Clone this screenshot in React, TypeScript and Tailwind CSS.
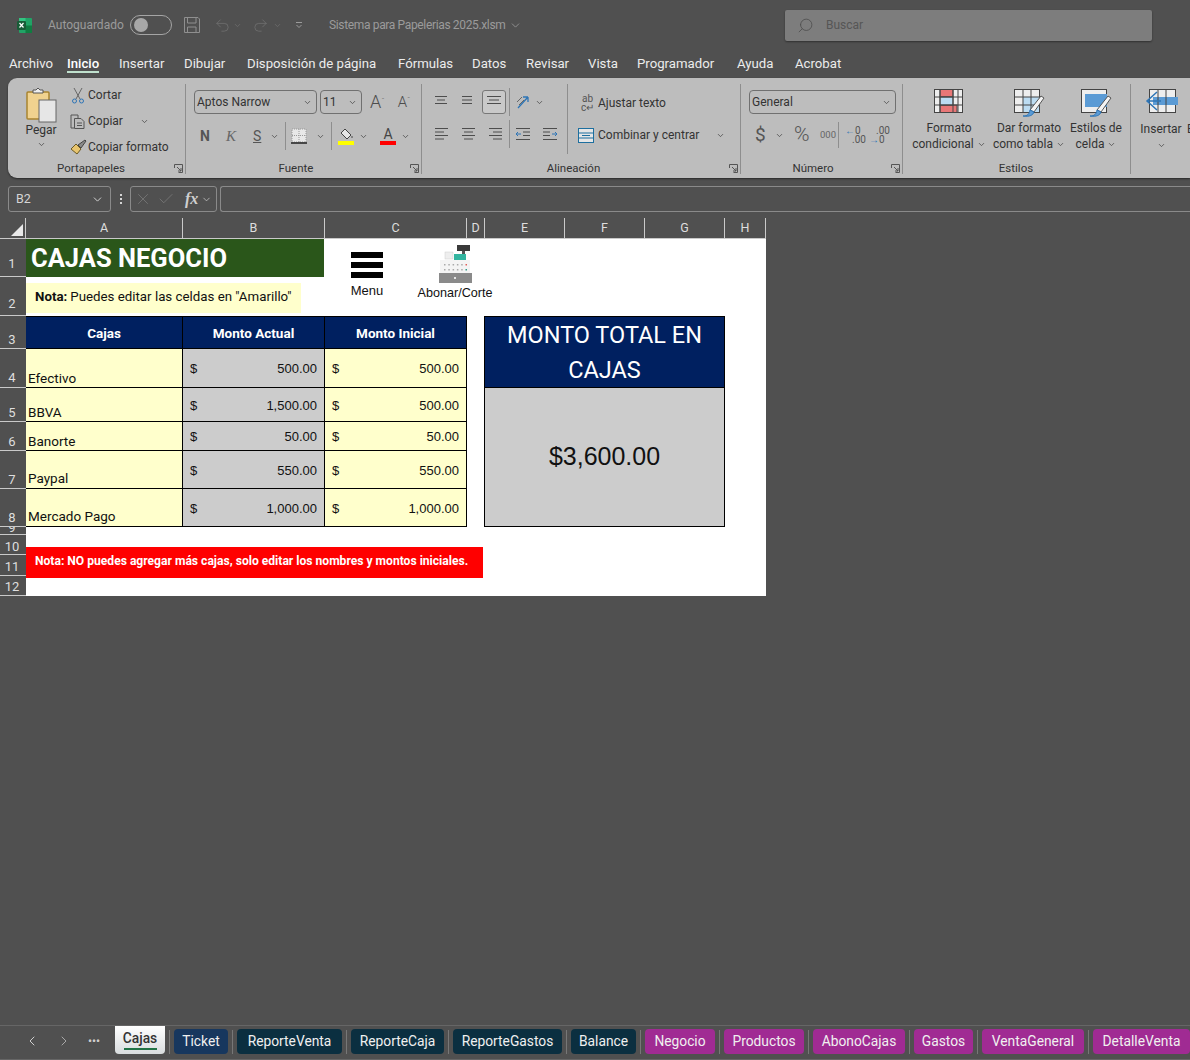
import type { ReactNode } from "react";
import { Check, ChevronDown, ChevronLeft, ChevronRight, Redo2, Search, Undo2, X } from "lucide-react";

const uiFont = "font-['Roboto',sans-serif]";

const Caret = ({ className = "" }: { className?: string }) => (
  <ChevronDown size={9} strokeWidth={2} className={`shrink-0 text-[#444] ${className}`} />
);

const Lines = ({ rows }: { rows: [number, number][] }) => (
  <svg width="18" height="16" viewBox="0 0 18 16" className="shrink-0" stroke="#4d4d4d" strokeWidth="1">
    {rows.map(([a, b], i) => (
      <line key={i} x1={a} x2={b} y1={2.5 + i * 3.5} y2={2.5 + i * 3.5} />
    ))}
  </svg>
);

const Launcher = () => (
  <svg width="9" height="9" viewBox="0 0 9 9" className="absolute right-[3px] bottom-[5px]" fill="none" stroke="#555">
    <path d="M.5 4V.5H8.500V8.500H4.500M3 3l4 4M4 7h3V4" />
  </svg>
);

const Group = ({ width, label, launcher, children, labelPad = "pr-[12px]" }: { width: string; label?: string; launcher?: boolean; children: ReactNode; labelPad?: string }) => (
  <div className={`relative flex h-full shrink-0 flex-col ${width}`}>
    <div className="absolute top-[6px] right-0 bottom-[4px] w-px bg-[#8e8e8e]" />
    <div className="h-[80px] overflow-hidden">{children}</div>
    <div className={`flex h-[20px] items-start justify-center pt-[2px] text-[11.500px] leading-[17px] text-[#333] ${labelPad}`}>{label}</div>
    {launcher && <Launcher />}
  </div>
);

const TitleBar = () => (
  <div className="flex h-[50px] shrink-0 items-center pl-[16px] text-[12px] text-[#9b9b9b]">
    <svg width="17" height="17" viewBox="0 0 17 17">
      <rect x="3" y="1" width="13" height="15" rx="1" fill="#21a366" />
      <rect x="9.500" y="8.500" width="6.500" height="7.500" fill="#107c41" />
      <rect x="3" y="1" width="6.500" height="7.500" fill="#33c481" />
      <rect x="1" y="4" width="9" height="9" rx="1" fill="#185c37" />
      <path d="M3.500 6l4 4.500M7.500 6l-4 4.500" stroke="#fff" strokeWidth="1.200" />
    </svg>
    <span className="ml-[15px] w-[82px]">Autoguardado</span>
    <div className="flex h-[20px] w-[42px] items-center rounded-full border border-[#a5a5a5] pl-[3px]">
      <div className="h-[14px] w-[14px] rounded-full bg-[#a8a8a8]" />
    </div>
    <svg width="18" height="18" viewBox="0 0 18 18" fill="none" stroke="#8f8f8f" className="ml-[11px]">
      <path d="M1.500 1.500H15l1.500 1.500V16.500H1.500zM4.500 1.500V7H13V1.500M4.500 16.500V11H13V16.500" />
    </svg>
    <Undo2 size={17} strokeWidth={1.200} className="ml-[13px] text-[#6f6f6f]" />
    <ChevronDown size={9} className="ml-[2px] text-[#6f6f6f]" />
    <Redo2 size={17} strokeWidth={1.200} className="ml-[10px] text-[#6f6f6f]" />
    <ChevronDown size={9} className="ml-[4px] text-[#6f6f6f]" />
    <svg width="8" height="8" viewBox="0 0 8 8" className="ml-[13px]" stroke="#9b9b9b" fill="none">
      <path d="M1 1.500H7M1.500 4l2.500 2.500L6.500 4" />
    </svg>
    <span className="ml-[26px] w-[180px] whitespace-nowrap tracking-[-0.35px]">Sistema para Papelerias 2025.xlsm</span>
    <ChevronDown size={13} strokeWidth={1.500} />
    <div className="ml-[263px] flex h-[31px] w-[367px] items-center rounded-[2px] bg-[#7d7d7d] pl-[12px] shadow-[0_1px_2px_rgba(0,0,0,0.4)]">
      <Search size={17} strokeWidth={1.200} className="-scale-x-100 text-[#4f4f4f]" />
      <span className="ml-[12px] text-[#565656]">Buscar</span>
    </div>
  </div>
);

const menuItems = [
  { label: "Archivo", width: "w-[58px]" },
  { label: "Inicio", width: "w-[52px]", active: true },
  { label: "Insertar", width: "w-[65px]" },
  { label: "Dibujar", width: "w-[63px]" },
  { label: "Disposición de página", width: "w-[151px]" },
  { label: "Fórmulas", width: "w-[74px]" },
  { label: "Datos", width: "w-[54px]" },
  { label: "Revisar", width: "w-[62px]" },
  { label: "Vista", width: "w-[49px]" },
  { label: "Programador", width: "w-[100px]" },
  { label: "Ayuda", width: "w-[58px]" },
  { label: "Acrobat", width: "w-[60px]" },
];

const MenuTabs = () => (
  <div className="flex h-[28px] shrink-0 pl-[9px] text-[13.200px] text-[#ececec]">
    {menuItems.map((item) => (
      <div key={item.label} className={`shrink-0 ${item.width}`}>
        <span className={`inline-block h-[23px] pt-[5px] leading-[18px] ${item.active ? "border-b-2 border-[#bfe0cd] font-medium text-white" : ""}`}>
          {item.label}
        </span>
      </div>
    ))}
  </div>
);

const SmallAction = ({ icon, label, caret }: { icon: ReactNode; label: string; caret?: boolean }) => (
  <div className="flex h-[26px] items-center text-[12px] text-[#333]">
    <div className="flex w-[20px] justify-center">{icon}</div>
    <span className="whitespace-nowrap">{label}</span>
    {caret && <Caret className="ml-[17px]" />}
  </div>
);

const Portapapeles = () => (
  <Group width="w-[178px]" label="Portapapeles" launcher>
    <div className="flex pt-[4px]">
      <div className="flex w-[58px] flex-col items-center pt-[5px] pl-[8px] text-[12px] text-[#333]">
        <svg width="31" height="36" viewBox="0 0 31 36" fill="none">
          <rect x="1" y="5" width="22" height="27" rx="1" fill="#f0d28f" stroke="#a9842f" strokeWidth="1.500" />
          <path d="M7 6V3h3l2-2 2 2h3v3z" fill="#eee" stroke="#555" />
          <rect x="13" y="13" width="17" height="22" fill="#e6e6e6" stroke="#666" />
        </svg>
        <span className="-mt-[1px] leading-[16px]">Pegar</span>
        <Caret className="mt-[2px]" />
      </div>
      <div className="flex flex-col pl-[2px]">
        <SmallAction
          label="Cortar"
          icon={
            <svg width="14" height="17" viewBox="0 0 14 17" fill="none" stroke="#666">
              <path d="M3 1l6 11M11 1L5 12" />
              <circle cx="3.500" cy="14" r="2" stroke="#2e75b6" />
              <circle cx="10.500" cy="14" r="2" stroke="#2e75b6" />
            </svg>
          }
        />
        <SmallAction
          label="Copiar"
          caret
          icon={
            <svg width="16" height="15" viewBox="0 0 16 15" fill="none" stroke="#555">
              <path d="M4 14H1V1H8V4M4.500 4.500H11l3 3V14.500H4.500zM7 9h5M7 11.500h5" />
            </svg>
          }
        />
        <SmallAction
          label="Copiar formato"
          icon={
            <svg width="17" height="16" viewBox="0 0 17 16">
              <path d="M1 10l5-5 5 5-4 5z" fill="#e8c56f" stroke="#6b5a25" />
              <path d="M8 6l7-5 1 1-5 7z" fill="#8a8a8a" stroke="#444" />
            </svg>
          }
        />
      </div>
    </div>
  </Group>
);

const Select = ({ width, label }: { width: string; label: string }) => (
  <div className={`flex h-[24px] items-center justify-between rounded-[4px] border border-[#707070] pr-[4px] pl-[2px] text-[12px] text-[#333] ${width}`}>
    <span>{label}</span>
    <Caret />
  </div>
);

const Fuente = () => (
  <Group width="w-[236px]" label="Fuente" launcher labelPad="pr-[16px]">
    <div className="flex flex-col pt-[12px] pl-[8px]">
      <div className="flex items-center gap-[3px] text-[#4d4d4d]">
        <Select width="w-[123px]" label="Aptos Narrow" />
        <Select width="w-[42px]" label="11" />
        <span className="ml-[5px] text-[18px] font-light leading-[24px]">A<sup className="text-[8px]">ˆ</sup></span>
        <span className="ml-[10px] text-[15px] font-light leading-[24px]">A<sup className="text-[8px]">ˇ</sup></span>
      </div>
      <div className="mt-[8px] flex h-[28px] items-center text-[13px] text-[#555]">
        <b className="ml-[6px] w-[26px] text-[14px]">N</b>
        <i className="w-[27px] font-['Liberation_Serif',serif] text-[15px] text-[#666]">K</i>
        <u className="w-[17px] text-[14px] text-[#555]">S</u>
        <Caret />
        <div className="mx-[6px] h-[28px] w-px bg-[#8e8e8e]" />
        <svg width="16" height="16" viewBox="0 0 16 16" className="-ml-[1px]">
          <rect x="1" y="1" width="14" height="13" fill="#e8e8e8" stroke="#999" strokeDasharray="1 1" />
          <path d="M8 1v13M1 7.500h14" stroke="#999" strokeDasharray="1 1" />
          <path d="M0 15h16" stroke="#222" strokeWidth="1.500" />
        </svg>
        <Caret className="ml-[9px]" />
        <div className="mx-[6px] h-[28px] w-px bg-[#8e8e8e]" />
        <div className="flex w-[16px] flex-col items-center">
          <svg width="15" height="12" viewBox="0 0 15 12" fill="#e6e6e6" stroke="#444">
            <path d="M6 1l6 6-4 4-6-6zM13 8v2" />
          </svg>
          <div className="mt-[1px] h-[4px] w-[16px] bg-[#ffff00]" />
        </div>
        <Caret className="ml-[5px]" />
        <div className="ml-[12px] flex w-[16px] flex-col items-center">
          <span className="h-[12px] text-[14px] leading-[12px] text-[#444]">A</span>
          <div className="mt-[1px] h-[4px] w-[16px] bg-[#ff0000]" />
        </div>
        <Caret className="ml-[5px]" />
      </div>
    </div>
  </Group>
);

const TOP: [number, number][] = [[1, 13], [3, 11], [1, 13]];
const MID: [number, number][] = [[4, 14], [4, 14], [4, 14]];
const FULL_L: [number, number][] = [[1, 14], [1, 10], [1, 14], [1, 10]];
const FULL_C: [number, number][] = [[2, 15], [4, 13], [2, 15], [4, 13]];
const FULL_R: [number, number][] = [[3, 16], [7, 16], [3, 16], [7, 16]];

const Indent = ({ flip }: { flip?: boolean }) => (
  <svg width="16" height="14" viewBox="0 0 16 14" fill="none" className={flip ? "-scale-x-100" : ""}>
    <path d="M1 1.500h14M8 5h7M8 8.500h7M1 12.500h14" stroke="#4d4d4d" />
    <path d="M6 7H1M3 5L1 7l2 2" stroke="#2e75b6" />
  </svg>
);

const Alineacion = () => (
  <Group width="w-[319px]" label="Alineación" launcher labelPad="pr-[16px]">
    <div className="flex">
      <div className="flex w-[145px] flex-col pt-[12px] pl-[12px]">
        <div className="flex h-[24px] items-center">
          <div className="flex w-[24px]"><Lines rows={TOP} /></div>
          <div className="flex w-[24px]"><Lines rows={MID} /></div>
          <div className="flex h-[24px] w-[24px] items-center justify-center rounded-[3px] border border-[#777] bg-[#c9c9c9]">
            <Lines rows={[[2, 16], [4, 14], [2, 16]]} />
          </div>
          <div className="mx-[3px] h-[28px] w-px bg-[#8e8e8e]" />
          <svg width="17" height="16" viewBox="0 0 17 16" className="ml-[3px]" fill="none">
            <path d="M2 14L12 3M12 3H7M12 3v5" stroke="#2e75b6" strokeWidth="1.300" />
            <path d="M1 8l5-5M3 11l5-5" stroke="#666" />
          </svg>
          <Caret className="ml-[2px]" />
        </div>
        <div className="mt-[8px] flex h-[24px] items-center">
          <div className="flex w-[26px]"><Lines rows={FULL_L} /></div>
          <div className="flex w-[26px]"><Lines rows={FULL_C} /></div>
          <div className="flex w-[23px]"><Lines rows={FULL_R} /></div>
          <div className="h-[28px] w-px bg-[#8e8e8e]" />
          <div className="ml-[5px] flex w-[27px]"><Indent /></div>
          <Indent flip />
        </div>
      </div>
      <div className="mt-[6px] h-[70px] w-px bg-[#8e8e8e]" />
      <div className="flex flex-col pt-[12px] pl-[12px] text-[12px] text-[#333]">
        <div className="flex h-[26px] items-center gap-[3px]">
          <span className="w-[15px] text-center text-[10px] leading-[9px] text-[#555]">ab<br />c↵</span>
          <span>Ajustar texto</span>
        </div>
        <div className="mt-[6px] -ml-[2px] flex h-[26px] items-center gap-[4px]">
          <svg width="16" height="15" viewBox="0 0 16 15" fill="#e6e6e6" stroke="#1d6f9f">
            <rect x=".5" y=".5" width="15" height="14" />
            <path d="M.5 5h15M.5 10h15M4 7.500h8" fill="none" />
          </svg>
          <span>Combinar y centrar</span>
          <Caret className="ml-[13px]" />
        </div>
      </div>
    </div>
  </Group>
);

const Decimal = ({ top, bottom, arrowTop }: { top: string; bottom: string; arrowTop?: boolean }) => (
  <div className="flex flex-col text-[10px] leading-[9px] text-[#555]">
    <span className={arrowTop ? "" : "pl-[7px]"}>{arrowTop && <span className="text-[#2e75b6]">←</span>}{top}</span>
    <span className={arrowTop ? "pl-[7px]" : ""}>{!arrowTop && <span className="text-[#2e75b6]">→</span>}{bottom}</span>
  </div>
);

const Numero = () => (
  <Group width="w-[162px]" label="Número" launcher labelPad="pr-[18px]">
    <div className="flex flex-col pt-[12px] pl-[8px]">
      <Select width="w-[147px]" label="General" />
      <div className="mt-[8px] flex h-[26px] items-center text-[#555]">
        <span className="ml-[6px] w-[20px] text-[19px]">$</span>
        <Caret />
        <span className="ml-[10px] w-[20px] text-[21px] font-light">%</span>
        <span className="ml-[6px] w-[18px] text-[9.500px] text-[#666]">000</span>
        <div className="h-[26px] w-px bg-[#8e8e8e]" />
        <div className="ml-[6px] w-[24px]"><Decimal arrowTop top="0" bottom=".00" /></div>
        <Decimal top=".00" bottom="0" />
      </div>
    </div>
  </Group>
);

const CondIcon = () => (
  <svg width="30" height="25" viewBox="0 0 30 25" stroke="#444">
    <rect x=".5" y=".5" width="28" height="23" fill="#eee" />
    <rect x="6" y=".5" width="13" height="7.500" fill="#e87777" />
    <rect x="6" y="16" width="17" height="7.500" fill="#e87777" />
    <rect x="6" y="8" width="13" height="8" fill="#bcdcf2" />
    <path d="M.5 8h28M.5 16h28M6 .5v23M19 .5v23M24 .5v23" fill="none" />
  </svg>
);

const Brush = () => (
  <g>
    <path d="M16 21l11-14 3 2-10 14z" fill="#f4f4f4" stroke="#555" />
    <path d="M9 27c5 0 6-2 7-6l4 2c-1 3-4 5-11 4z" fill="#5b9bd5" stroke="#2e75b6" />
  </g>
);

const TableIcon = () => (
  <svg width="31" height="29" viewBox="0 0 31 29" fill="none">
    <rect x=".5" y=".5" width="25" height="23" fill="#eee" stroke="#444" />
    <rect x="9" y="8" width="16" height="15" fill="#bcdcf2" />
    <path d="M.5 8h25M.5 16h25M9 .5v23M17 .5v23" stroke="#444" />
    <Brush />
  </svg>
);

const CellIcon = () => (
  <svg width="31" height="29" viewBox="0 0 31 29" fill="none">
    <rect x=".5" y=".5" width="25" height="23" fill="#eee" stroke="#444" />
    <rect x="4" y="5" width="22" height="13" fill="#5b9bd5" />
    <Brush />
  </svg>
);

const InsertIcon = () => (
  <svg width="33" height="25" viewBox="0 0 33 25" fill="none">
    <rect x="4.500" y=".5" width="26" height="23" fill="#eee" stroke="#444" />
    <rect x="8" y="8" width="25" height="8" fill="#5b9bd5" />
    <path d="M13 .5v23M21 .5v23" stroke="#444" />
    <path d="M12 3L2 12l10 9M2 12h14" stroke="#2e75b6" strokeWidth="1.500" />
  </svg>
);

const StyleButton = ({ width, icon, lines }: { width: string; icon: ReactNode; lines: [string, string] }) => (
  <div className={`flex flex-col items-center text-[12px] leading-[16px] text-[#333] ${width}`}>
    <div className="flex h-[24px] items-start">{icon}</div>
    <span className="mt-[7px] whitespace-nowrap">{lines[0]}</span>
    <span className="flex items-center gap-[3px] whitespace-nowrap">{lines[1]}<Caret /></span>
  </div>
);

const Ribbon = () => (
  <div className="ml-[8px] flex h-[100px] shrink-0 overflow-hidden rounded-l-[9px] bg-[#bdbdbd] shadow-[0_1px_2px_rgba(0,0,0,0.5)]">
    <Portapapeles />
    <Fuente />
    <Alineacion />
    <Numero />
    <Group width="w-[228px]" label="Estilos" labelPad="pr-[2px]">
      <div className="flex pt-[11px] pl-[6px]">
        <StyleButton width="w-[80px]" icon={<CondIcon />} lines={["Formato", "condicional"]} />
        <StyleButton width="w-[80px]" icon={<TableIcon />} lines={["Dar formato", "como tabla"]} />
        <StyleButton width="w-[54px]" icon={<CellIcon />} lines={["Estilos de", "celda"]} />
      </div>
    </Group>
    <div className="flex pt-[11px] pl-[10px] text-[12px] leading-[16px] text-[#333]">
      <div className="flex w-[40px] flex-col items-center">
        <div className="flex h-[25px] items-start"><InsertIcon /></div>
        <span className="mt-[7px]">Insertar</span>
        <Caret className="mt-[4px]" />
      </div>
      <span className="mt-[32px] ml-[6px]">Eliminar</span>
    </div>
  </div>
);

const FormulaBar = () => (
  <div className="mt-[8px] flex h-[26px] shrink-0 pl-[8px] text-[#d5d5d5]">
    <div className="flex w-[103px] items-center justify-between rounded-[3px] border border-[#8a8a8a] pr-[6px] pl-[7px] text-[12.500px]">
      <span>B2</span>
      <ChevronDown size={13} strokeWidth={1.800} />
    </div>
    <div className="flex w-[19px] flex-col items-center justify-center gap-[2px]">
      <div className="h-[2px] w-[2px] bg-[#d5d5d5]" />
      <div className="h-[2px] w-[2px] bg-[#d5d5d5]" />
      <div className="h-[2px] w-[2px] bg-[#d5d5d5]" />
    </div>
    <div className="flex w-[87px] items-center rounded-[3px] border border-[#8a8a8a] pl-[3px]">
      <X size={18} strokeWidth={1} className="text-[#7d7d7d]" />
      <Check size={18} strokeWidth={1} className="ml-[5px] text-[#7d7d7d]" />
      <i className="ml-[10px] font-['Liberation_Serif',serif] text-[16px] font-bold text-[#cfcfcf]">fx</i>
      <ChevronDown size={11} strokeWidth={1.500} className="ml-[3px]" />
    </div>
    <div className="ml-[3px] flex-1 rounded-l-[3px] border border-r-0 border-[#8a8a8a]" />
  </div>
);

const columns = [
  { label: "A", className: "col-start-2 row-start-1" },
  { label: "B", className: "col-start-3 row-start-1" },
  { label: "C", className: "col-start-4 row-start-1" },
  { label: "D", className: "col-start-5 row-start-1" },
  { label: "E", className: "col-start-6 row-start-1" },
  { label: "F", className: "col-start-7 row-start-1" },
  { label: "G", className: "col-start-8 row-start-1" },
  { label: "H", className: "col-start-9 row-start-1" },
];

const rows = [
  { label: "1", className: "row-start-2 pb-[6px]" },
  { label: "2", className: "row-start-3 pb-[5px]" },
  { label: "3", className: "row-start-4 pb-[2px]" },
  { label: "4", className: "row-start-5 pb-[3px]" },
  { label: "5", className: "row-start-6 pb-[2px]" },
  { label: "6", className: "row-start-7 pb-[2px]" },
  { label: "7", className: "row-start-8 pb-[2px]" },
  { label: "8", className: "row-start-9 pb-[2px]" },
  { label: "9", className: "row-start-10 pb-0" },
  { label: "10", className: "row-start-11 pb-[1px]" },
  { label: "11", className: "row-start-12 pb-[2px]" },
  { label: "12", className: "row-start-13 pb-[2px]" },
];

const cajas = [
  { name: "Efectivo", actual: "500.00", inicial: "500.00", row: "row-start-5", pad: "pt-[1px]", namePad: "pb-[1px]" },
  { name: "BBVA", actual: "1,500.00", inicial: "500.00", row: "row-start-6", pad: "pt-[3px]", namePad: "pb-[1px]" },
  { name: "Banorte", actual: "50.00", inicial: "50.00", row: "row-start-7", pad: "pt-[2px]", namePad: "pb-[1px]" },
  { name: "Paypal", actual: "550.00", inicial: "550.00", row: "row-start-8", pad: "pt-[3px]", namePad: "pb-[2px]" },
  { name: "Mercado Pago", actual: "1,000.00", inicial: "1,000.00", row: "row-start-9", pad: "pt-[3px]", namePad: "pb-[2px]" },
];

const Money = ({ value, className }: { value: string; className: string }) => (
  <div className={`flex items-center justify-between border-r border-b border-black pr-[7px] pl-[7px] font-['Liberation_Sans',sans-serif] text-[13px] text-[#111] ${className}`}>
    <span>$</span>
    <span>{value}</span>
  </div>
);

const Sheet = () => (
  <div className="relative mt-[6px] grid w-[766px] shrink-0 grid-cols-[26px_157px_142px_142px_18px_80px_80px_80px_41px] grid-rows-[21px_38px_39px_33px_39px_34px_29px_38px_38px_8px_20px_21px_20px] text-[13px]">
    <div className="col-start-1 row-start-1 flex items-end justify-end border-r border-b border-[#c9c9c9] p-[2px]">
      <div className="h-0 w-0 border-b-[12px] border-l-[12px] border-b-[#e8e8e8] border-l-transparent" />
    </div>
    {columns.map((c) => (
      <div key={c.label} className={`flex items-center justify-center border-r border-b border-[#c9c9c9] text-[12.500px] text-[#dedede] ${c.className}`}>
        {c.label}
      </div>
    ))}
    {rows.map((r) => (
      <div key={r.label} className={`col-start-1 flex items-end justify-center overflow-hidden border-b border-[#c9c9c9] pr-[2px] text-[13px] leading-[13px] text-[#dedede] ${r.className}`}>
        {r.label}
      </div>
    ))}

    <div className="col-start-2 col-end-10 row-start-2 row-end-14 bg-white" />

    <div className="col-start-2 col-end-4 row-start-2 flex items-center border-r border-white bg-[#2a561a] pl-[5px] text-[25.500px] font-bold text-white">
      CAJAS NEGOCIO
    </div>

    {["Cajas", "Monto Actual", "Monto Inicial"].map((title, i) => (
      <div
        key={title}
        className={`row-start-4 flex items-center justify-center border-t border-r border-b border-black bg-[#002060] pt-[1px] text-[13.500px] font-bold text-white ${["col-start-2", "col-start-3", "col-start-4"][i]}`}
      >
        {title}
      </div>
    ))}

    {cajas.map((caja) => (
      <div key={caja.name} className="contents">
        <div className={`col-start-2 flex items-end border-r border-b border-black bg-[#ffffcc] pl-[2px] text-[13.500px] leading-[15px] text-[#111] ${caja.row} ${caja.namePad}`}>
          {caja.name}
        </div>
        <Money value={caja.actual} className={`col-start-3 bg-[#cccccc] ${caja.row} ${caja.pad}`} />
        <Money value={caja.inicial} className={`col-start-4 bg-[#ffffcc] ${caja.row} ${caja.pad}`} />
      </div>
    ))}

    <div className="col-start-6 col-end-9 row-start-4 row-end-6 -ml-px flex items-center justify-center border border-black bg-[#002060] pt-[2px] text-center text-[23.500px] leading-[35px] text-white">
      MONTO TOTAL EN<br />CAJAS
    </div>
    <div className="col-start-6 col-end-9 row-start-6 row-end-10 -ml-px flex items-center justify-center border-x border-b border-black bg-[#cccccc] font-['Liberation_Sans',sans-serif] text-[25px] text-[#111]">
      $3,600.00
    </div>

    {/* formas flotantes sobre la hoja */}
    <div className="absolute top-[65px] left-[26px] flex h-[30px] w-[275px] items-center bg-[#ffffcc] pb-[2px] pl-[9px] text-[13.300px] text-[#111]">
      <b className="mr-[3px]">Nota:</b>Puedes editar las celdas en "Amarillo"
    </div>
    <div className="absolute top-[329px] left-[26px] flex h-[31px] w-[457px] items-start bg-[#ff0000] pt-[5px] pl-[9px] text-[12.100px] font-bold text-white">
      Nota: NO puedes agregar más cajas, solo editar los nombres y montos iniciales.
    </div>
    <div className="absolute top-[34px] left-[340px] flex w-[54px] flex-col items-center">
      <svg width="32" height="26" viewBox="0 0 32 26" fill="#000">
        <rect width="32" height="6" y="0" />
        <rect width="32" height="6" y="10" />
        <rect width="32" height="6" y="20" />
      </svg>
      <span className="mt-[5px] font-['Liberation_Sans',sans-serif] text-[13px] leading-[16px] text-[#111]">Menu</span>
    </div>
    <div className="absolute top-[26px] left-[410px] flex w-[90px] flex-col items-center">
      <svg width="36" height="39" viewBox="0 0 36 39">
        <rect x="20" y="1" width="13" height="6" fill="#3a3a3a" />
        <rect x="25" y="7" width="3" height="3" fill="#555" />
        <rect x="8" y="8" width="8" height="7" fill="#eeeeee" stroke="#cfcfcf" strokeWidth=".5" />
        <rect x="17" y="10" width="12" height="6" fill="#33b5a0" />
        <rect x="3" y="16" width="30" height="13" fill="#f4f4f4" />
        {[0, 1, 2, 3, 4, 5].map((i) => (
          <rect key={i} x={7 + i * 4.300} y="20" width="1.500" height="1.500" fill={i === 5 ? "#e0605a" : "#aaaaaa"} />
        ))}
        {[0, 1, 2, 3, 4, 5].map((i) => (
          <rect key={i} x={7 + i * 4.300} y="25" width="1.500" height="1.500" fill={i === 5 ? "#2e9b88" : "#aaaaaa"} />
        ))}
        <rect x="2" y="29" width="33" height="10" fill="#8a8a8a" />
        <rect x="17" y="33" width="2" height="2" fill="#e6e6e6" />
      </svg>
      <span className="mt-[2px] whitespace-nowrap font-['Liberation_Sans',sans-serif] text-[12.600px] leading-[16px] text-[#111]">Abonar/Corte</span>
    </div>
  </div>
);

const tabs = [
  { label: "Ticket", className: "w-[54px] bg-[#17375e]" },
  { label: "ReporteVenta", className: "w-[105px] bg-[#0b2f40]" },
  { label: "ReporteCaja", className: "w-[93px] bg-[#0b2f40]" },
  { label: "ReporteGastos", className: "w-[109px] bg-[#0b2f40]" },
  { label: "Balance", className: "w-[65px] bg-[#0b2f40]" },
  { label: "Negocio", className: "w-[70px] bg-[#a02b93]" },
  { label: "Productos", className: "w-[80px] bg-[#a02b93]" },
  { label: "AbonoCajas", className: "w-[92px] bg-[#a02b93]" },
  { label: "Gastos", className: "w-[59px] bg-[#a02b93]" },
  { label: "VentaGeneral", className: "w-[102px] bg-[#a02b93]" },
  { label: "DetalleVenta", className: "w-[97px] bg-[#a02b93]" },
];

const SheetTabs = () => (
  <div className="mt-auto flex h-[35px] shrink-0 items-start overflow-hidden border-y border-[#666666] text-[13.800px] text-[#f0f0f0]">
    <div className="flex h-[30px] w-[115px] shrink-0 items-center pl-[24px] text-[#cfcfcf]">
      <ChevronLeft size={16} strokeWidth={1.500} />
      <ChevronRight size={16} strokeWidth={1.500} className="ml-[16px] text-[#a8a8a8]" />
      <span className="ml-[16px] text-[11px] font-bold leading-[11px]">•••</span>
    </div>
    <div className="flex h-[28px] w-[50px] shrink-0 flex-col items-center rounded-b-[4px] bg-gradient-to-b from-white to-[#d8dcde] pt-[3px] font-medium text-[#333]">
      <span className="leading-[18px]">Cajas</span>
      <div className="mt-[1px] h-[2px] w-[33px] bg-[#217346]" />
    </div>
    <div className="mt-[4px] mr-[4px] ml-[4px] h-[24px] w-px shrink-0 bg-[#777777]" />
    {tabs.map((tab) => (
      <div key={tab.label} className="mt-[3px] flex shrink-0 items-center">
        <div className={`flex h-[25px] items-center justify-center rounded-[4px] whitespace-nowrap ${tab.className}`}>
          {tab.label}
        </div>
        <div className="mx-[4px] h-[24px] w-px bg-[#777777]" />
      </div>
    ))}
  </div>
);

export default function App() {
  return (
    <div className={`flex h-[1060px] w-[1190px] flex-col overflow-hidden bg-[#505050] ${uiFont}`}>
      <TitleBar />
      <MenuTabs />
      <Ribbon />
      <FormulaBar />
      <Sheet />
      <SheetTabs />
    </div>
  );
}
